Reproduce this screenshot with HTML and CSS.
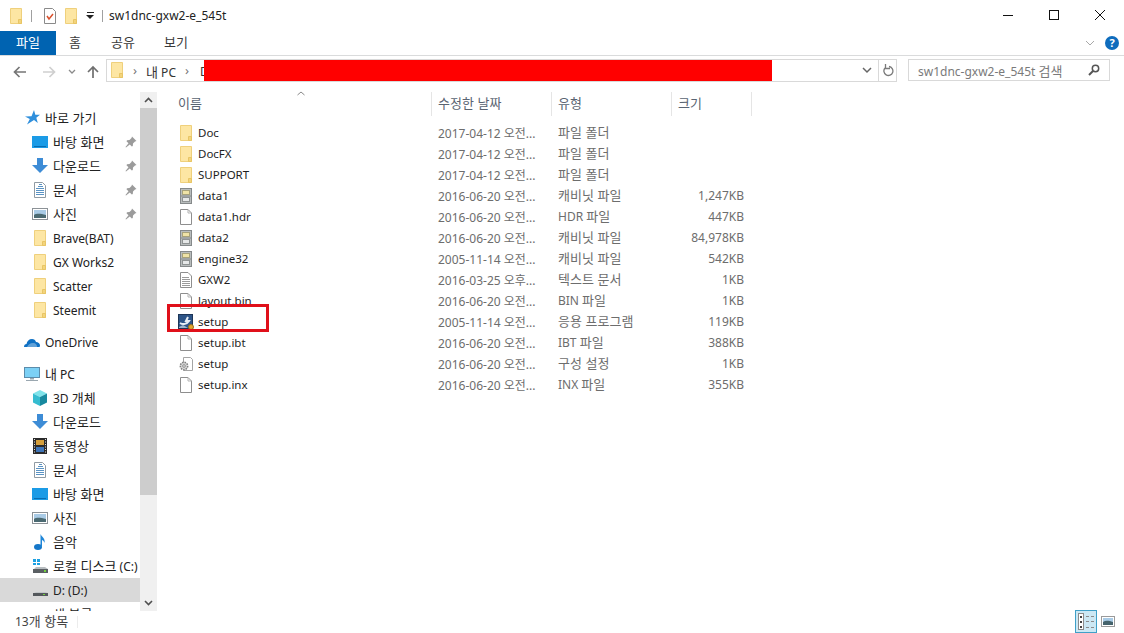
FILE: index.html
```html
<!DOCTYPE html>
<html lang="ko">

<head>
    <meta charset="UTF-8">
    <meta name="viewport" content="width=device-width, initial-scale=1.0">
    <title>sw1dnc-gxw2-e_545t</title>
    <link rel="stylesheet" href="styles.css">
</head>

<body>
    <svg class="defs" width="0" height="0">
        <symbol id="i-folder" viewBox="0 0 16 16">
            <path d="M2.500.500h11v15h-11z" fill="#fde6a3" stroke="#efd07c"/>
            <path d="M10.500 15.500v-4h3v4z" fill="#f3d47c" stroke="#e8c565"/>
        </symbol>
        <symbol id="i-check" viewBox="0 0 16 16">
            <path d="M2.500.500h8l3 3v12h-11z" fill="#fff" stroke="#8a8a8a"/>
            <path d="M5 8l2 3 4-5" fill="none" stroke="#d9502c" stroke-width="1.500"/>
        </symbol>
        <symbol id="i-cab" viewBox="0 0 16 16">
            <rect x="2.500" y=".5" width="11" height="15" fill="#b9bdbd" stroke="#85898a"/>
            <rect x="4.500" y="2.500" width="7" height="4" fill="#efe3a6" stroke="#a8a27a"/>
            <rect x="4.500" y="9.500" width="7" height="4" fill="#e6e8e8" stroke="#8f9393"/>
            <path d="M3 8h10" stroke="#868a8a"/>
        </symbol>
        <symbol id="i-blank" viewBox="0 0 16 16">
            <path d="M2.500.500h7.500l3.500 3.500v11.500h-11z" fill="#fff" stroke="#8e8e8e"/>
            <path d="M10 .500v3.500h3.500" fill="none" stroke="#b5b5b5"/>
        </symbol>
        <symbol id="i-text" viewBox="0 0 16 16">
            <path d="M2.500.500h7.500l3.500 3.500v11.500h-11z" fill="#fff" stroke="#8e8e8e"/>
            <path d="M4 5.500h7M4 7.500h8M4 9.500h8M4 11.500h8M4 13.500h8" stroke="#9a9a9a"/>
        </symbol>
        <symbol id="i-gear" viewBox="0 0 16 16">
            <path d="M5.500 1.500h7l2 2v11h-9z" fill="#fff" stroke="#a5a5a5"/>
            <circle cx="6" cy="10" r="3.700" fill="#d5d5d5" stroke="#7f7f7f" stroke-width="1.500" stroke-dasharray="1.500 1"/>
            <circle cx="6" cy="10" r="1.300" fill="#fff" stroke="#8a8a8a"/>
        </symbol>
        <symbol id="i-setup" viewBox="0 0 16 16">
            <rect x=".5" y=".5" width="14" height="14" fill="#2c5487" stroke="#1d3557"/>
            <path d="M2 9c3 2 7 1 9-2l-3 0 2-4" fill="none" stroke="#e8eef5" stroke-width="2"/>
            <path d="M1 13l4-2 5 3H1z" fill="#9fb4cb"/>
            <circle cx="13" cy="13" r="2.500" fill="#e3a72f" stroke="#96701e"/>
        </symbol>
        <symbol id="i-star" viewBox="0 0 16 16">
            <path d="M10 0l1.300 4.800H16l-3.700 3 1.500 5.200-3.800-3L3 14.500l2.800-5.500L1 6.500l6.500-.3z" fill="#2f8fdc"/>
        </symbol>
        <symbol id="i-desk" viewBox="0 0 16 16">
            <rect y="2" width="16" height="12" fill="#1b9be6"/>
            <path d="M2 12.500h12" stroke="#0a6cb0"/>
        </symbol>
        <symbol id="i-down" viewBox="0 0 16 16">
            <path d="M5 0h6v7h5l-8 8-8-8h5z" fill="#3d8cd6"/>
        </symbol>
        <symbol id="i-doc" viewBox="0 0 16 16">
            <path d="M2.500.500h8l3 3v12h-11z" fill="#fff" stroke="#8f9aa3"/>
            <path d="M4 6.500h8M4 8.500h8M4 10.500h8M4 12.500h8M7 2.500h3M6 4.500h5" stroke="#5a93c4"/>
        </symbol>
        <symbol id="i-pic" viewBox="0 0 16 16">
            <rect x=".5" y="2.500" width="15" height="11" fill="#fff" stroke="#8c9297"/>
            <rect x="2" y="4" width="12" height="8" fill="#a9cbe6"/>
            <path d="M2 9c3-2 7-1 12 0v3H2z" fill="#4b6a72"/>
        </symbol>
        <symbol id="i-cloud" viewBox="0 0 16 16">
            <path d="M0 13c0-2 1-3 2.500-3C3 7 5 5 8 5c2 0 3.500 1 4 3 2 0 4 1.500 4 3.500 0 1-.5 1.500-1 1.500z" fill="#0f71c4"/>
            <path d="M3 13c1-2 3-4 6-4s4 2 4 4z" fill="#fff" opacity=".35"/>
        </symbol>
        <symbol id="i-pc" viewBox="0 0 16 16">
            <rect x=".5" y="1.500" width="15" height="10" fill="#7cd0f5" stroke="#5b8cab"/>
            <path d="M6 12h4v1.500H6zM2 14h12v1H2z" fill="#9aa7b0"/>
        </symbol>
        <symbol id="i-cube" viewBox="0 0 16 16">
            <path d="M8 0l7 3.500-7 3.500-7-3.500z" fill="#7fe3ea"/>
            <path d="M1 3.500l7 3.500v9l-7-3.500z" fill="#35bcd0"/>
            <path d="M15 3.500l-7 3.500v9l7-3.500z" fill="#17899f"/>
        </symbol>
        <symbol id="i-film" viewBox="0 0 16 16">
            <rect x="1" y="0" width="14" height="16" fill="#2b2b2b"/>
            <rect x="4" y="2" width="8" height="5" fill="#d59f3b"/>
            <rect x="4" y="9" width="8" height="5" fill="#3f75b8"/>
            <path d="M2.500 1v14M13.500 1v14" stroke="#ddd" stroke-dasharray="1 1.500"/>
        </symbol>
        <symbol id="i-music" viewBox="0 0 16 16">
            <ellipse cx="6" cy="13" rx="4" ry="3" fill="#1577c9"/>
            <path d="M8.500 13V0c1 3 5 4 4 9-.5-2-2-3-2.500-3v7z" fill="#1f86d8"/>
        </symbol>
        <symbol id="i-diskc" viewBox="0 0 16 16">
            <path d="M1 11h15v4H1z" fill="#5a5f63"/>
            <path d="M2 11l2-2h9l3 2z" fill="#b8bdc0"/>
            <rect x="12" y="12" width="2" height="2" fill="#73d13d"/>
            <path d="M1 1h3v3H1zM5 1h3v3H5zM1 5h3v2H1zM5 5h3v2H5z" fill="#1da1e2"/>
        </symbol>
        <symbol id="i-diskd" viewBox="0 0 16 16">
            <path d="M1 11h15v3H1z" fill="#54585c"/>
            <path d="M2 11l2-1h9l3 1z" fill="#c2c6c8"/>
            <rect x="11" y="12" width="2" height="1" fill="#73d13d"/>
        </symbol>
        <symbol id="i-pin" viewBox="0 0 12 12">
            <path d="M7 .5l4.500 4.500-1.500.5-2 2-.2 2.500-1 .5-2-2L1 11.500l-.5-.5 3-3.800-2-2 .5-1 2.500-.2 2-2z" fill="#9b9b9b"/>
        </symbol>
    </svg>

    <div class="window">
        <div class="titlebar">
            <svg class="ico"><use href="#i-folder"/></svg>
            <span class="qa-sep"></span>
            <svg class="ico"><use href="#i-check"/></svg>
            <svg class="ico qa-third"><use href="#i-folder"/></svg>
            <svg class="qa-drop" width="9" height="8" viewBox="0 0 9 8"><path d="M0 3h8L4 7z" fill="#222"/><path d="M1 .5h7" stroke="#222"/></svg>
            <span class="qa-sep qa-sep-last"></span>
            <span class="title">sw1dnc-gxw2-e_545t</span>
            <div class="caption">
                <svg width="46" height="31" viewBox="0 0 46 31"><path d="M18 15.500h10" stroke="#111"/></svg>
                <svg width="46" height="31" viewBox="0 0 46 31"><rect x="18.500" y="10.500" width="9" height="9" fill="none" stroke="#111"/></svg>
                <svg width="46" height="31" viewBox="0 0 46 31"><path d="M18 10l10 10M28 10L18 20" stroke="#111" fill="none"/></svg>
            </div>
        </div>

        <div class="ribbon">
            <span class="tab tab-file">파일</span>
            <span class="tab tab-home">홈</span>
            <span class="tab tab-share">공유</span>
            <span class="tab tab-view">보기</span>
            <svg class="ribbon-chev" width="10" height="6" viewBox="0 0 10 6"><path d="M1 1l4 4 4-4" fill="none" stroke="#a8a8a8"/></svg>
            <span class="help">?</span>
        </div>

        <div class="navbar">
            <svg class="nav-btn nav-back" width="13" height="12" viewBox="0 0 13 12"><path d="M13 6H2M6.500 1L1.500 6l5 5" fill="none" stroke="#767676" stroke-width="1.700"/></svg>
            <svg class="nav-btn nav-fwd" width="13" height="12" viewBox="0 0 13 12"><path d="M0 6h11M6.500 1l5 5-5 5" fill="none" stroke="#cfcfcf" stroke-width="1.700"/></svg>
            <svg class="nav-btn nav-hist" width="8" height="6" viewBox="0 0 8 6"><path d="M1 1l3 3 3-3" fill="none" stroke="#8a8a8a" stroke-width="1.300"/></svg>
            <svg class="nav-btn nav-up" width="12" height="14" viewBox="0 0 12 14"><path d="M6 13V2M1 7l5-5 5 5" fill="none" stroke="#6f6f6f" stroke-width="1.700"/></svg>
            <div class="address">
                <svg class="ico"><use href="#i-folder"/></svg>
                <span class="crumb-sep">›</span>
                <span class="crumb"><span class="ko">내</span> PC</span>
                <span class="crumb-sep">›</span>
                <span class="crumb">D</span>
                <svg class="addr-drop" width="10" height="7" viewBox="0 0 10 7"><path d="M1 1l4 4 4-4" fill="none" stroke="#666" stroke-width="1.500"/></svg>
                <span class="addr-refresh">
                    <svg width="12" height="13" viewBox="0 0 12 13"><path d="M7 2.500a4.500 4.500 0 1 1-4 1.500M3.500 0v4.500H8" fill="none" stroke="#7a7a7a" stroke-width="1.300"/></svg>
                </span>
            </div>
            <div class="search">
                <span class="search-text">sw1dnc-gxw2-e_545t <span class="ko">검색</span></span>
                <svg width="12" height="12" viewBox="0 0 12 12"><circle cx="7.500" cy="4.500" r="3.200" fill="none" stroke="#555" stroke-width="1.500"/><path d="M5 7l-4 4" stroke="#555" stroke-width="2"/></svg>
            </div>
        </div>

        <div class="content">
            <aside class="sidebar">
                <div class="tree">
                    <div class="node top"><svg class="ico"><use href="#i-star"/></svg><span class="ko">바로 가기</span></div>
                    <div class="node"><svg class="ico"><use href="#i-desk"/></svg><span class="ko">바탕 화면</span><svg class="pin"><use href="#i-pin"/></svg></div>
                    <div class="node"><svg class="ico"><use href="#i-down"/></svg><span class="ko">다운로드</span><svg class="pin"><use href="#i-pin"/></svg></div>
                    <div class="node"><svg class="ico"><use href="#i-doc"/></svg><span class="ko">문서</span><svg class="pin"><use href="#i-pin"/></svg></div>
                    <div class="node"><svg class="ico"><use href="#i-pic"/></svg><span class="ko">사진</span><svg class="pin"><use href="#i-pin"/></svg></div>
                    <div class="node"><svg class="ico"><use href="#i-folder"/></svg>Brave(BAT)</div>
                    <div class="node"><svg class="ico"><use href="#i-folder"/></svg>GX Works2</div>
                    <div class="node"><svg class="ico"><use href="#i-folder"/></svg>Scatter</div>
                    <div class="node"><svg class="ico"><use href="#i-folder"/></svg>Steemit</div>
                    <div class="node top group"><svg class="ico"><use href="#i-cloud"/></svg>OneDrive</div>
                    <div class="node top group"><svg class="ico"><use href="#i-pc"/></svg><span><span class="ko">내</span> PC</span></div>
                    <div class="node"><svg class="ico"><use href="#i-cube"/></svg><span>3D <span class="ko">개체</span></span></div>
                    <div class="node"><svg class="ico"><use href="#i-down"/></svg><span class="ko">다운로드</span></div>
                    <div class="node"><svg class="ico"><use href="#i-film"/></svg><span class="ko">동영상</span></div>
                    <div class="node"><svg class="ico"><use href="#i-doc"/></svg><span class="ko">문서</span></div>
                    <div class="node"><svg class="ico"><use href="#i-desk"/></svg><span class="ko">바탕 화면</span></div>
                    <div class="node"><svg class="ico"><use href="#i-pic"/></svg><span class="ko">사진</span></div>
                    <div class="node"><svg class="ico"><use href="#i-music"/></svg><span class="ko">음악</span></div>
                    <div class="node"><svg class="ico"><use href="#i-diskc"/></svg><span><span class="ko">로컬 디스크</span> (C:)</span></div>
                    <div class="node current"><svg class="ico"><use href="#i-diskd"/></svg>D: (D:)</div>
                    <div class="node"><svg class="ico"><use href="#i-diskd"/></svg><span class="ko">새 볼륨</span></div>
                </div>
                <div class="scrollbar">
                    <svg class="sb-arrow" width="17" height="16" viewBox="0 0 17 16"><path d="M5 10l3.500-3.500L12 10" fill="none" stroke="#505050" stroke-width="1.600"/></svg>
                    <div class="sb-thumb"></div>
                    <div class="sb-rest"></div>
                    <svg class="sb-arrow" width="17" height="16" viewBox="0 0 17 16"><path d="M5 6l3.500 3.500L12 6" fill="none" stroke="#505050" stroke-width="1.600"/></svg>
                </div>
            </aside>

            <main class="files">
                <div class="head">
                    <span class="hd hd-name ko">이름<svg class="sort" width="8" height="5" viewBox="0 0 8 5"><path d="M.5 4L4 1l3.500 3" fill="none" stroke="#8a8a8a"/></svg></span>
                    <span class="hd ko">수정한 날짜</span>
                    <span class="hd ko">유형</span>
                    <span class="hd ko">크기</span>
                </div>
                <div class="list">
                    <div class="row"><span class="name"><svg class="ico"><use href="#i-folder"/></svg>Doc</span><span class="cell">2017-04-12 오전...</span><span class="cell type"><span class="ko">파일 폴더</span></span><span class="cell size"></span></div>
                    <div class="row"><span class="name"><svg class="ico"><use href="#i-folder"/></svg>DocFX</span><span class="cell">2017-04-12 오전...</span><span class="cell type"><span class="ko">파일 폴더</span></span><span class="cell size"></span></div>
                    <div class="row"><span class="name"><svg class="ico"><use href="#i-folder"/></svg>SUPPORT</span><span class="cell">2017-04-12 오전...</span><span class="cell type"><span class="ko">파일 폴더</span></span><span class="cell size"></span></div>
                    <div class="row"><span class="name"><svg class="ico"><use href="#i-cab"/></svg>data1</span><span class="cell">2016-06-20 오전...</span><span class="cell type"><span class="ko">캐비닛 파일</span></span><span class="cell size">1,247KB</span></div>
                    <div class="row"><span class="name"><svg class="ico"><use href="#i-blank"/></svg>data1.hdr</span><span class="cell">2016-06-20 오전...</span><span class="cell type">HDR <span class="ko">파일</span></span><span class="cell size">447KB</span></div>
                    <div class="row"><span class="name"><svg class="ico"><use href="#i-cab"/></svg>data2</span><span class="cell">2016-06-20 오전...</span><span class="cell type"><span class="ko">캐비닛 파일</span></span><span class="cell size">84,978KB</span></div>
                    <div class="row"><span class="name"><svg class="ico"><use href="#i-cab"/></svg>engine32</span><span class="cell">2005-11-14 오전...</span><span class="cell type"><span class="ko">캐비닛 파일</span></span><span class="cell size">542KB</span></div>
                    <div class="row"><span class="name"><svg class="ico"><use href="#i-text"/></svg>GXW2</span><span class="cell">2016-03-25 오후...</span><span class="cell type"><span class="ko">텍스트 문서</span></span><span class="cell size">1KB</span></div>
                    <div class="row"><span class="name"><svg class="ico"><use href="#i-blank"/></svg>layout.bin</span><span class="cell">2016-06-20 오전...</span><span class="cell type">BIN <span class="ko">파일</span></span><span class="cell size">1KB</span></div>
                    <div class="row"><span class="name"><svg class="ico"><use href="#i-setup"/></svg>setup</span><span class="cell">2005-11-14 오전...</span><span class="cell type"><span class="ko">응용 프로그램</span></span><span class="cell size">119KB</span></div>
                    <div class="row"><span class="name"><svg class="ico"><use href="#i-blank"/></svg>setup.ibt</span><span class="cell">2016-06-20 오전...</span><span class="cell type">IBT <span class="ko">파일</span></span><span class="cell size">388KB</span></div>
                    <div class="row"><span class="name"><svg class="ico"><use href="#i-gear"/></svg>setup</span><span class="cell">2016-06-20 오전...</span><span class="cell type"><span class="ko">구성 설정</span></span><span class="cell size">1KB</span></div>
                    <div class="row"><span class="name"><svg class="ico"><use href="#i-blank"/></svg>setup.inx</span><span class="cell">2016-06-20 오전...</span><span class="cell type">INX <span class="ko">파일</span></span><span class="cell size">355KB</span></div>
                </div>
            </main>
        </div>

        <div class="statusbar">
            <span class="count">13<span class="ko">개 항목</span></span>
            <span class="status-sep"></span>
            <div class="views">
                <span class="view-details">
                    <svg width="20" height="19" viewBox="0 0 20 19">
                        <rect x="2.500" y="1.500" width="5" height="16" fill="#fff" stroke="#8b8b8b"/>
                        <path d="M4 4h2v2H4zM4 9h2v2H4zM4 14h2v2H4z" fill="#444"/>
                        <path d="M10 4.500h3M15 4.500h3M10 9.500h3M15 9.500h3M10 15.500h3M15 15.500h3" stroke="#8b8b8b"/>
                    </svg>
                </span>
                <svg width="14" height="11" viewBox="0 0 14 11">
                    <rect x=".5" y=".5" width="13" height="10" fill="#fff" stroke="#9a9a9a"/>
                    <rect x="2" y="2" width="10" height="7" fill="#a9cbe6"/>
                    <path d="M2 6c3-2 6-1 10 0v3H2z" fill="#45636c"/>
                </svg>
            </div>
        </div>
    </div>

    <!-- 가림 표시와 강조 상자 -->
    <div class="redact"></div>
    <div class="highlight"></div>
</body>

</html>
```

FILE: styles.css
```css
* {
    box-sizing: border-box;
}

html,
body {
    margin: 0;
    height: 100%;
    overflow: hidden;
    background: #fff;
}

body {
    position: relative;
    font-family: "Noto Sans", "Noto Sans CJK KR", sans-serif;
    font-size: 12px;
    color: #1e1e1e;
}

.defs {
    position: absolute;
}

.window {
    display: flex;
    flex-direction: column;
    height: 633px;
}

.ko {
    font-family: "Noto Sans CJK KR", sans-serif;
    font-size: 13px;
}

.ico {
    width: 16px;
    height: 16px;
    flex: none;
}

/* title bar */
.titlebar {
    display: flex;
    align-items: center;
    height: 31px;
    padding-left: 8px;
    flex: none;
}

.qa-sep {
    width: 1px;
    height: 12px;
    background: #a0a0a0;
    margin: 0 10px 0 7px;
}

.qa-third {
    margin-left: 5px;
}

.qa-drop {
    margin-left: 7px;
}

.qa-sep-last {
    margin: 0 6px 0 7px;
}

.title {
    color: #222;
}

.caption {
    display: flex;
    margin-left: auto;
    margin-right: 1px;
}

/* ribbon tabs */
.ribbon {
    display: flex;
    align-items: center;
    height: 25px;
    flex: none;
    border-bottom: 1px solid #dadbdc;
}

.tab {
    height: 24px;
    font-family: "Noto Sans CJK KR", sans-serif;
    font-size: 13px;
    line-height: 22px;
    text-align: center;
    color: #3a3a3a;
}

.tab-file {
    width: 56px;
    background: #0063b1;
    color: #fff;
}

.tab-home {
    width: 38px;
}

.tab-share {
    width: 58px;
}

.tab-view {
    width: 48px;
}

.ribbon-chev {
    margin-left: auto;
    margin-right: 10px;
}

.help {
    width: 14px;
    height: 14px;
    margin-right: 5px;
    border-radius: 50%;
    background: #0f6cbd;
    color: #fff;
    font-size: 11px;
    font-weight: 700;
    line-height: 14px;
    text-align: center;
}

/* navigation row */
.navbar {
    display: flex;
    align-items: center;
    height: 34px;
    padding: 0 12px 6px 13px;
    flex: none;
}

.nav-btn {
    margin-top: 3px;
}

.nav-fwd {
    margin-left: 17px;
}

.nav-hist {
    margin-left: 12px;
}

.nav-up {
    margin-left: 11px;
}

.address {
    display: flex;
    align-items: center;
    width: 791px;
    height: 23px;
    margin-left: 7px;
    padding-left: 2px;
    border: 1px solid #d9d9d9;
    color: #333;
}

.crumb {
    padding-top: 2px;
}

.crumb-sep {
    margin: 0 9px 0 8px;
    color: #777;
    font-size: 13px;
}

.crumb + .crumb-sep {
    margin: 0 11px 0 9px;
}

.addr-drop {
    margin-left: auto;
    margin-right: 6px;
}

.addr-refresh {
    display: flex;
    align-items: center;
    justify-content: center;
    width: 18px;
    height: 100%;
    border-left: 1px solid #d9d9d9;
}

.search {
    display: flex;
    align-items: center;
    justify-content: space-between;
    width: 202px;
    height: 22px;
    margin-left: 11px;
    padding: 0 9px 0 9px;
    border: 1px solid #d9d9d9;
    color: #7a7a7a;
}

.search-text {
    padding-top: 1px;
}

/* content */
.content {
    display: flex;
    flex: 1;
    min-height: 0;
}

.sidebar {
    display: flex;
    width: 157px;
    flex: none;
    height: 521px;
    overflow: hidden;
}

.tree {
    width: 140px;
    padding-top: 16px;
    overflow: hidden;
    flex: none;
}

.node {
    position: relative;
    display: flex;
    align-items: center;
    gap: 5px;
    height: 24px;
    padding-left: 32px;
    white-space: nowrap;
    color: #222;
}

.node > span {
    padding-bottom: 2px;
}

.node.top {
    padding-left: 24px;
}

.node.group {
    margin-top: 8px;
}

.node.current {
    background: #d9d9d9;
}

.pin {
    position: absolute;
    left: 125px;
    top: 6px;
    width: 12px;
    height: 12px;
}

.scrollbar {
    display: flex;
    flex-direction: column;
    width: 17px;
    background: #f0f0f0;
    margin-top: 2px;
}

.sb-arrow {
    flex: none;
}

.sb-thumb {
    height: 387px;
    background: #cdcdcd;
    flex: none;
}

.sb-rest {
    flex: 1;
}

.files {
    flex: 1;
    padding-top: 2px;
}

.head {
    display: grid;
    grid-template-columns: 275px 120px 120px 80px;
    height: 24px;
}

.hd {
    position: relative;
    padding-left: 6px;
    line-height: 22px;
    color: #5a6472;
    border-right: 1px solid #e5e5e5;
}

.hd-name {
    padding-left: 21px;
}

.sort {
    position: absolute;
    left: 140px;
    top: -1px;
}

.list {
    padding-top: 6px;
}

.row {
    display: grid;
    grid-template-columns: 275px 120px 120px 72px;
    height: 21px;
    align-items: center;
    color: #6d6d6d;
}

.name {
    display: flex;
    align-items: center;
    gap: 4px;
    padding-left: 21px;
    font-size: 11.5px;
    color: #1e1e1e;
}

.cell {
    padding-left: 6px;
    white-space: nowrap;
}

.type {
    padding-bottom: 2px;
}

.size {
    text-align: right;
}

/* status bar */
.statusbar {
    display: flex;
    align-items: center;
    height: 23px;
    flex: none;
    padding-left: 15px;
    color: #444;
}

.count {
    padding-bottom: 2px;
}

.status-sep {
    width: 1px;
    height: 12px;
    margin-left: 9px;
    background: #ececec;
}

.views {
    display: flex;
    align-items: center;
    gap: 4px;
    margin-left: auto;
    margin-right: 9px;
}

.view-details {
    display: flex;
    align-items: center;
    justify-content: center;
    width: 22px;
    height: 23px;
    background: #cce8f4;
    border: 1px solid #3fa0c8;
}

/* overlays on the screenshot */
.redact {
    position: absolute;
    left: 204px;
    top: 60px;
    width: 568px;
    height: 21px;
    background: #f00;
}

.highlight {
    position: absolute;
    left: 167px;
    top: 304px;
    width: 102px;
    height: 28px;
    border: 3px solid #e0101a;
}
```
